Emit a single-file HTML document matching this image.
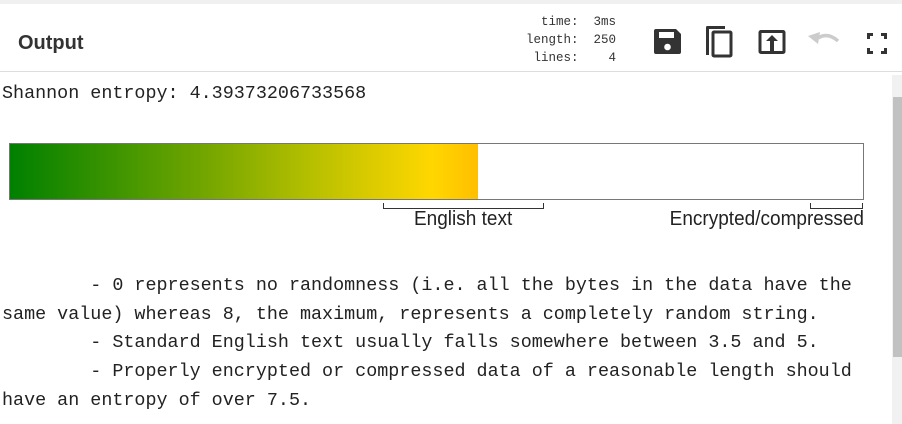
<!DOCTYPE html>
<html><head><style>
html,body{margin:0;padding:0;width:902px;height:424px;overflow:hidden;background:#fff;font-family:"Liberation Sans",sans-serif}
.top{position:absolute;left:0;top:0;width:902px;height:4px;background:#f0f0f0}
.hdr{position:absolute;left:0;top:4px;width:902px;height:67px;background:#fff;border-bottom:1px solid #ddd}
.title{position:absolute;left:18px;top:28px;font-size:20px;font-weight:bold;color:#333}
.stats{position:absolute;left:480px;top:9px;width:136px;font-family:"Liberation Mono",monospace;font-size:12.5px;line-height:18px;color:#333;text-align:right;white-space:pre}
.mono{position:absolute;font-family:"Liberation Mono",monospace;font-size:18.4px;color:#222;white-space:pre}
.sb{position:absolute;left:892px;top:75px;width:10px;height:349px;background:#f1f1f1}
.th{position:absolute;left:893px;top:97px;width:9px;height:260px;background:#c1c1c1}
.lbl{position:absolute;top:209px;font-size:19px;color:#222;transform:scaleY(1.05)}
</style></head><body>
<div class="top"></div>
<div class="hdr">
<div class="title">Output</div>
<div class="stats">  time:  3ms
length:  250
 lines:    4</div>
<svg style="position:absolute;left:650px;top:16px" width="245" height="40" viewBox="0 0 245 40">
 <path d="M6 9h20l5 5v18q0 2-2 2H6q-2 0-2-2V11q0-2 2-2z" fill="#333"/>
 <rect x="9" y="12" width="15" height="6" fill="#fff"/>
 <circle cx="17.5" cy="27" r="3.3" fill="#fff"/>
 <path d="M57 6h18v3H59v26h-3V8q0-2 1-2z" fill="#333"/>
 <rect x="63" y="12" width="18" height="24" fill="none" stroke="#333" stroke-width="3" rx="1"/>
 <rect x="110" y="11.5" width="24" height="21" fill="none" stroke="#333" stroke-width="3" rx="1"/>
 <path d="M122 15l-6 6h4v10h4V21h4z" fill="#333"/>
 <path d="M168 18q10-6 20 3" fill="none" stroke="#ccc" stroke-width="3.5"/>
 <path d="M158 16l12-4-2 12z" fill="#ccc"/>
 <path d="M217 13h6v3h-3v3h-3zM231 13h6v6h-3v-3h-3zM217 28h3v3h3v3h-6zM234 28h3v6h-6v-3h3z" fill="#333"/>
</svg>
</div>
<div class="mono" style="left:2px;top:83px">Shannon entropy: 4.39373206733568</div>
<div style="position:absolute;left:9px;top:143px;width:853px;height:55px;border:1px solid #777;background:#fff"></div>
<div style="position:absolute;left:10px;top:144px;width:468px;height:55px;background:linear-gradient(to right,#008000,#6ea400 40%,#b8c000 65%,#ffd700 90%,#ffbf00)"></div>
<div style="position:absolute;left:383px;top:203px;width:159px;height:5px;border:1.5px solid #333;border-top:none"></div>
<div style="position:absolute;left:810px;top:203px;width:51px;height:5px;border:1.5px solid #333;border-top:none"></div>
<div class="lbl" style="left:414px">English text</div>
<div class="lbl" style="right:38px">Encrypted/compressed</div>
<div class="mono" style="left:2px;top:272px;line-height:28.7px">        - 0 represents no randomness (i.e. all the bytes in the data have the
same value) whereas 8, the maximum, represents a completely random string.
        - Standard English text usually falls somewhere between 3.5 and 5.
        - Properly encrypted or compressed data of a reasonable length should
have an entropy of over 7.5.</div>
<div class="sb"></div><div class="th"></div>
</body></html>
